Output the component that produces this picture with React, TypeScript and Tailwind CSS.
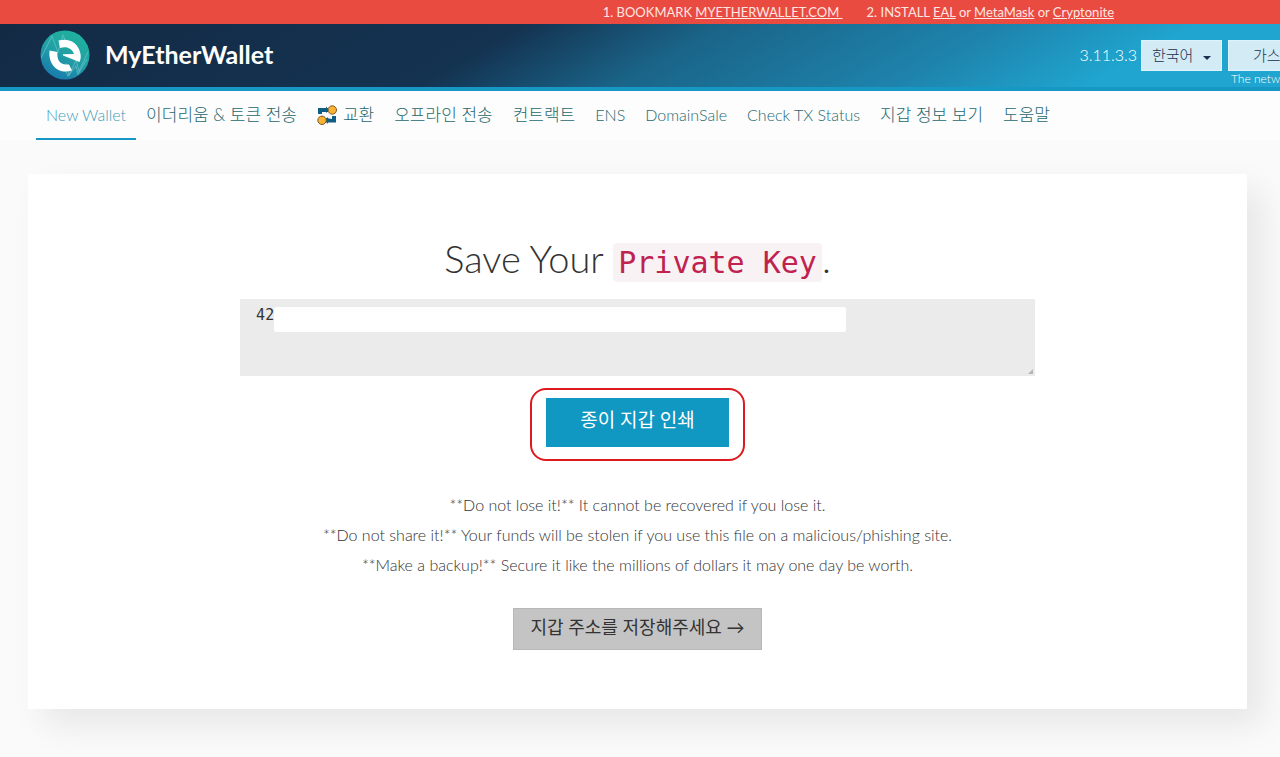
import type { ReactNode } from "react";

const LATIN = "font-['Lato','Noto_Sans_CJK_KR',sans-serif]";

function Logo() {
  return (
    <svg viewBox="0 0 50 50" className="size-[50px] shrink-0" aria-hidden="true">
      <defs>
        <linearGradient id="disc" x1="0.75" y1="0" x2="0.25" y2="1">
          <stop offset="0" stopColor="#1fb39c" />
          <stop offset="0.5" stopColor="#219fa5" />
          <stop offset="1" stopColor="#1878ae" />
        </linearGradient>
        <clipPath id="discClip">
          <circle cx="25" cy="25" r="24.5" />
        </clipPath>
      </defs>
      <circle cx="25" cy="25" r="24.5" fill="url(#disc)" />
      <g clipPath="url(#discClip)" fill="none" stroke="#7fd0d0" strokeOpacity="0.5" strokeWidth="1.1">
        <path d="M1 28L12 6l6 16 5-17 6 14" />
        <path d="M26 33l3 12 7-15 3 11 9-19" />
        <path d="M22 34l6 12 8-10 2 8 9-15" />
      </g>
      <path d="M18.500 10.500C29 7.500 38.500 12.500 40.500 24C41 27 40.800 29 39.500 32L23 25.500V24.300L34 24C32 18.500 27 16 20 18Z" fill="#fff" />
      <path d="M9.500 20.500L17.500 22C16.500 29.500 20 35 27 34.500H29L32 40.500C19 45 8 35.500 9.500 20.500Z" fill="#fff" />
    </svg>
  );
}

function SwapIcon() {
  return (
    <svg viewBox="0 0 20 20" className="size-5 shrink-0" aria-hidden="true">
      <path d="M1 9V3h10v4H5v2z" fill="#0e5d83" />
      <path d="M9 13v4.500h10V11h-4v3z" fill="#0e5d83" />
      <path d="M9 1.500l3 3.500-3 3zM11 12l-3 3 3 4z" fill="#0e5d83" />
      <circle cx="15.300" cy="5" r="4.200" fill="#f9b232" stroke="#7c5a2b" />
      <circle cx="5" cy="15.300" r="4.200" fill="#f9b232" stroke="#7c5a2b" />
    </svg>
  );
}

const tabs: { label: string; korean?: boolean; icon?: ReactNode }[] = [
  { label: "New Wallet" },
  { label: "이더리움 & 토큰 전송", korean: true },
  { label: "교환", korean: true, icon: <SwapIcon /> },
  { label: "오프라인 전송", korean: true },
  { label: "컨트랙트", korean: true },
  { label: "ENS" },
  { label: "DomainSale" },
  { label: "Check TX Status" },
  { label: "지갑 정보 보기", korean: true },
  { label: "도움말", korean: true },
];

function Announcement() {
  return (
    <div className="flex h-6 items-center justify-end gap-6 overflow-hidden whitespace-nowrap bg-[#ea4b40] pr-[166px] text-[13px] font-normal leading-6 text-[#ffe6e3]">
      <span>
        1. BOOKMARK{" "}
        <a href="#bookmark" className="whitespace-pre underline">{"MYETHERWALLET.COM "}</a>
      </span>
      <span>
        2. INSTALL <a href="#eal" className="underline">EAL</a> or{" "}
        <a href="#metamask" className="underline">MetaMask</a> or{" "}
        <a href="#cryptonite" className="underline">Cryptonite</a>
      </span>
    </div>
  );
}

function Header() {
  return (
    <header className="flex h-[67px] items-start overflow-hidden border-b-4 border-[#1798c4] bg-[linear-gradient(150deg,#132a45_0%,#143351_38%,#1a6488_52%,#1e83ac_72%,#1fa5cf_86%,#1fa5cf_100%)] pl-10">
      <a href="#home" className="mt-1.5 flex items-center gap-[15px] text-[25px] font-bold text-white">
        <Logo />
        MyEtherWallet
      </a>
      <div className="-mr-32 ml-auto mt-4 flex shrink-0 items-start text-white">
        <span className="mr-1 text-base leading-[30px]">3.11.3.3</span>
        <button className="mr-1.5 flex h-[31px] w-[81px] items-center justify-between border border-[#dff3fa] bg-[#d2ebf5] px-2.5 text-[15px] text-[#163151]">
          한국어
          <svg viewBox="0 0 8 4" className="mt-1 h-1 w-2" aria-hidden="true"><path d="M0 0h8L4 4z" fill="#163151" /></svg>
        </button>
        <div className="w-[180px]">
          <button className="block h-[31px] w-full border border-[#dff3fa] bg-[#d2ebf5] px-6 text-left text-[15px] text-[#163151]">가스 가격: 21 Gwei</button>
          <p className="whitespace-nowrap pl-[3px] text-[12px] leading-4">The network is really full right now.</p>
        </div>
      </div>
    </header>
  );
}

function Tabs() {
  return (
    <nav className="overflow-hidden bg-[#fdfdfd] pl-9">
      <ul className="flex h-[49px] whitespace-nowrap">
        {tabs.map((tab, i) => (
          <li key={tab.label} className="flex">
            <a
              href="#tab"
              className={`flex items-center gap-1.5 border-b-2 px-2.5 ${tab.korean ? "text-[17px]" : "text-base"} ${
                i === 0 ? "border-[#1798c4] text-[#3d9cbb]" : "border-transparent text-[#26686f]"
              }`}
            >
              {tab.icon}
              {tab.label}
            </a>
          </li>
        ))}
      </ul>
    </nav>
  );
}

export default function App() {
  return (
    <div className={`min-h-screen overflow-hidden bg-[#fafafa] font-light ${LATIN}`}>
      <Announcement />
      <Header />
      <Tabs />
      <main className="mb-12 ml-7 mr-[33px] mt-[34px] flex flex-col items-center bg-white pb-[59px] pt-[59px] shadow-[16px_16px_32px_rgba(0,0,0,0.08)]">
        <h1 className="text-[38px] leading-[50px] text-[#333]">
          <label htmlFor="private-key">
            Save Your{" "}
            <code className="rounded-sm bg-[#f9f2f4] px-[5px] py-0.5 font-['DejaVu_Sans_Mono',monospace] text-[30px] font-normal text-[#c0224f]">Private Key</code>.
          </label>
        </h1>
        <div className="relative mt-[11px] w-[65.2%]">
          <textarea
            id="private-key"
            readOnly
            defaultValue="42"
            className="block h-[77px] w-full resize-none bg-[#ebebeb] px-4 py-1.5 font-['DejaVu_Sans_Mono',monospace] text-[15px] leading-5 font-normal text-[#333] outline-none"
          />
          <div className="absolute left-[34px] top-2 h-[25px] w-[572px] rounded-xs bg-white" />
          <svg viewBox="0 0 5 5" className="absolute bottom-0.5 right-0.5 size-[5px]" aria-hidden="true"><path d="M5 0v5H0z" fill="#b5b5b5" /></svg>
        </div>
        <div className="mt-3 rounded-2xl border-2 border-[#dc1a20] px-3.5 pb-3 pt-2">
          <button className="flex h-[49px] w-[183px] items-center justify-center bg-[#1097c2] pb-1 text-[19px] font-normal text-white">종이 지갑 인쇄</button>
        </div>
        <div className="mt-[29px] text-center text-base leading-[30px] text-[#333]">
          <p>**Do not lose it!** It cannot be recovered if you lose it.</p>
          <p>**Do not share it!** Your funds will be stolen if you use this file on a malicious/phishing site.</p>
          <p>**Make a backup!** Secure it like the millions of dollars it may one day be worth.</p>
        </div>
        <button className="mt-7 flex h-[42px] w-[249px] items-center justify-center border border-[#b7b7b7] bg-[#c4c4c4] pb-1 text-[18px] font-normal text-[#333]">지갑 주소를 저장해주세요 →</button>
      </main>
    </div>
  );
}
